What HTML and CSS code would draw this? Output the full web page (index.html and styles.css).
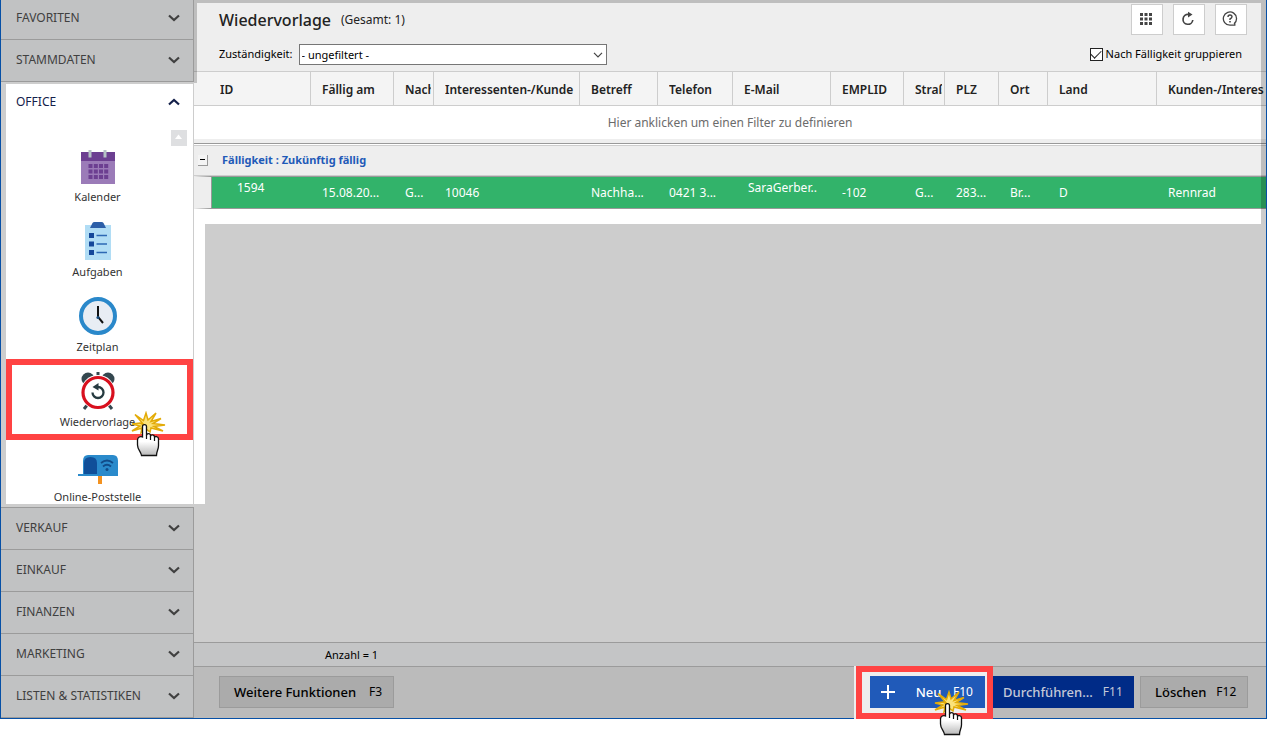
FILE: index.html
```html
<!DOCTYPE html>
<html lang="de">
<head>
<meta charset="utf-8">
<meta name="viewport" content="width=device-width, initial-scale=1">
<title>Wiedervorlage</title>
<link rel="stylesheet" href="styles.css">
</head>
<body>
<svg class="defs" aria-hidden="true">
  <symbol id="down" viewBox="0 0 12 8"><path d="M1 1.500 6 6l5-4.500" fill="none" stroke="currentColor" stroke-width="2.200"/></symbol>
  <symbol id="up" viewBox="0 0 12 8"><path d="M1 6.500 6 2l5 4.500" fill="none" stroke="currentColor" stroke-width="2.200"/></symbol>
  <symbol id="pointer" viewBox="0 0 36 46">
    <path d="M13 14 4 3.500l8.500 6L15 2l2 7 8-7-5 8.500 10-3-8 5 12 1.500-11 1.500 9 4.500-12-3-1 4-4-3-5 4 1-5-10 3 8-5-8-2 8-1z" fill="#fbe27a" stroke="#e3ab08" stroke-width="1.500"/>
    <path d="M11.500 15.500c0-2.500 4-2.500 4 0v9c0-2.500 4-2.300 4 0v1c0-2.300 4-2 4 .5v1c0-2.200 4-2 4 .8v7c0 4-2 5-2 9.700h-15c-.5-4-4-6-4-10.500v-5c0-3 3-4 5-3z" fill="url(#hand)" stroke="#111" stroke-width="1.300"/>
    <path d="M15.500 24v4M19.500 25v4M23.500 27v3" stroke="#111" stroke-width="1.200"/>
  </symbol>
  <linearGradient id="hand" x1="0" y1="0" x2="0" y2="1"><stop offset=".55" stop-color="#fff"/><stop offset="1" stop-color="#b8b8b8"/></linearGradient>
</svg>
<div class="window">
  <nav class="sidebar">
    <button class="group">FAVORITEN<svg><use href="#down"/></svg></button>
    <button class="group">STAMMDATEN<svg><use href="#down"/></svg></button>
    <section class="panel">
      <button class="group open">OFFICE<svg><use href="#up"/></svg></button>
      <button class="scroll" aria-label="Nach oben"><svg viewBox="0 0 16 16"><path d="M4 9l3.500-4.500L11 9z" fill="#fff"/></svg></button>
      <a class="entry" href="#"><svg viewBox="0 0 40 40"><path d="M3 6h34v32H3z" fill="#9b7bb8"/><path d="M3 6h34v9H3z" fill="#6c3f91"/><path d="M10.500 4h3v7.500h-3zM25.500 4h3v7.500h-3z" fill="#b5c2c5"/><path d="M10.500 18h4v4h-4zm5.300 0h4v4h-4zm5.200 0h4v4h-4zm5.200 0h4v4h-4zM10.500 23.500h4v4h-4zm5.300 0h4v4h-4zm5.200 0h4v4h-4zm5.200 0h4v4h-4zM10.500 29h4v4h-4zm5.300 0h4v4h-4zm5.200 0h4v4h-4zm5.200 0h4v4h-4z" fill="#6c3f91"/></svg><span>Kalender</span></a>
      <a class="entry" href="#"><svg viewBox="0 0 40 40"><path d="M7 4h26v35H7z" fill="#b1ddf5"/><path d="M12 7l2.500-5q.5-1 2-1h7q1.500 0 2 1L28 7z" fill="#2d5fa8"/><path d="M11 12h5v5h-5zM11 20.500h5v5h-5zM11 29h5v5h-5z" fill="#15489a"/><path d="M18.500 14.500H29M18.500 23H29M18.500 31.500H29" stroke="#2d68b4" stroke-width="1.500"/></svg><span>Aufgaben</span></a>
      <a class="entry" href="#"><svg viewBox="0 0 40 40"><circle cx="20" cy="20" r="17" fill="#e8edf4" stroke="#2a88ca" stroke-width="4"/><path d="M20 10v11l5 6" fill="none" stroke="#111" stroke-width="2"/><circle cx="20" cy="21.500" r="1.600" fill="#1c4f80"/></svg><span>Zeitplan</span></a>
      <a class="entry marked" href="#"><svg viewBox="0 0 40 40"><path d="M10 33l-4 5M30 33l4 5" stroke="#34474f" stroke-width="3"/><circle cx="10" cy="8" r="6.500" fill="#34474f"/><circle cx="30" cy="8" r="6.500" fill="#34474f"/><path d="M20 1v5" stroke="#34474f" stroke-width="3"/><circle cx="20" cy="21.500" r="17.500" fill="#fff"/><circle cx="20" cy="21.500" r="15" fill="#fff" stroke="#d8101e" stroke-width="3.200"/><path d="M14.500 21.500a5.500 5.500 0 1 0 5.500-5.500" fill="none" stroke="#263a40" stroke-width="2.300"/><path d="M14.500 16l6-4v7.500z" fill="#263a40"/></svg><span>Wiedervorlage</span><svg class="pointer"><use href="#pointer"/></svg></a>
      <a class="entry" href="#"><svg viewBox="0 0 40 40"><path d="M20 28h4v10h-4z" fill="#f39220"/><path d="M10 9h25q5 0 5 6v14H5V15q0-6 5-6z" fill="#2a8acb"/><path d="M6 28V17q0-6 6.500-6T19 17v11z" fill="#104f99"/><path d="M0 29h40" stroke="#2a8acb" stroke-width="2"/><path d="M23 17q6-5 12 0M25 20.500q4-3.500 8 0" fill="none" stroke="#114b88" stroke-width="1.800"/><circle cx="29" cy="23.500" r="1.500" fill="#114b88"/></svg><span>Online-Poststelle</span></a>
    </section>
    <button class="group">VERKAUF<svg><use href="#down"/></svg></button>
    <button class="group">EINKAUF<svg><use href="#down"/></svg></button>
    <button class="group">FINANZEN<svg><use href="#down"/></svg></button>
    <button class="group">MARKETING<svg><use href="#down"/></svg></button>
    <button class="group">LISTEN &amp; STATISTIKEN<svg><use href="#down"/></svg></button>
  </nav>
  <main class="main">
    <div class="content">
      <header class="head">
        <h1>Wiedervorlage</h1><span class="total">(Gesamt: 1)</span>
        <div class="tools">
          <button aria-label="Ansicht"><svg viewBox="0 0 16 16"><path d="M2 2h3v3H2zm4.500 0h3v3h-3zM11 2h3v3h-3zM2 6.500h3v3H2zm4.500 0h3v3h-3zm4.500 0h3v3h-3zM2 11h3v3H2zm4.500 0h3v3h-3zm4.500 0h3v3h-3z" fill="#444"/></svg></button>
          <button aria-label="Aktualisieren"><svg viewBox="0 0 16 16"><path d="M8.500 3.500A4.900 4.900 0 1 0 12.800 9" fill="none" stroke="#444" stroke-width="1.700"/><path d="M8 .8 12.500 3.600 8 6.500z" fill="#444"/></svg></button>
          <button aria-label="Hilfe"><svg viewBox="0 0 16 16"><path d="M12 12.800A6.600 6.600 0 1 0 8 14.200h4.800v-2" fill="none" stroke="#444" stroke-width="1.300"/><path d="M6 6q0-2 2-2t2 1.800q0 1.200-2 2.200v1" fill="none" stroke="#444" stroke-width="1.400"/><path d="M7.200 10h1.600v1.600H7.200z" fill="#444"/></svg></button>
        </div>
      </header>
      <div class="filter">
        <label for="resp">Zuständigkeit:</label>
        <span class="select"><select id="resp"><option>- ungefiltert -</option></select><svg viewBox="0 0 10 6"><path d="M1 .8l4 4 4-4" fill="none" stroke="#444" stroke-width="1.200"/></svg></span>
        <span class="check"><input type="checkbox" id="grp" checked><label for="grp">Nach Fälligkeit gruppieren</label></span>
      </div>
      <table class="grid">
        <colgroup><col class="w117"><col class="w83"><col class="w40"><col class="w146"><col class="w78"><col class="w75"><col class="w98"><col class="w73"><col class="w41"><col class="w54"><col class="w49"><col class="w109"><col></colgroup>
        <thead>
          <tr><th><div>ID</div></th><th><div>Fällig am</div></th><th><div>Nach</div></th><th><div>Interessenten-/Kunde</div></th><th><div>Betreff</div></th><th><div>Telefon</div></th><th><div>E-Mail</div></th><th><div>EMPLID</div></th><th><div>Straß</div></th><th><div>PLZ</div></th><th><div>Ort</div></th><th><div>Land</div></th><th><div>Kunden-/Interess</div></th></tr>
        </thead>
        <tbody>
          <tr class="hint"><td colspan="13">Hier anklicken um einen Filter zu definieren</td></tr>
          <tr class="cluster"><td colspan="13"><div><button aria-label="Gruppe schließen"></button>Fälligkeit : Zukünftig fällig</div></td></tr>
          <tr class="record"><td class="raised">1594</td><td>15.08.20...</td><td>G...</td><td>10046</td><td>Nachha...</td><td>0421 3...</td><td class="raised mail">SaraGerber..</td><td>-102</td><td>G...</td><td>283...</td><td>Br...</td><td>D</td><td>Rennrad</td></tr>
        </tbody>
      </table>
      <div class="shade top"></div><div class="shade left"></div><div class="shade right"></div>
    </div>
    <div class="canvas"></div>
    <div class="count">Anzahl = 1</div>
    <footer class="actions">
      <button class="btn more">Weitere Funktionen<kbd>F3</kbd></button>
      <div class="focus"><button class="btn new"><svg viewBox="0 0 16 16"><path d="M8 1v14M1 8h14" stroke="#fff" stroke-width="2"/></svg>Neu<kbd>F10</kbd></button><svg class="pointer"><use href="#pointer"/></svg></div>
      <button class="btn run">Durchführen...<kbd>F11</kbd></button>
      <button class="btn delete">Löschen<kbd>F12</kbd></button>
    </footer>
  </main>
</div>
</body>
</html>
```
FILE: styles.css
```css
* { box-sizing: border-box; }
body {
  margin: 0;
  height: 100vh;
  padding-bottom: 18px;
  overflow: hidden;
  background: #fff;
  font: 13px/20px "Noto Sans", "Open Sans", sans-serif;
  color: #222;
}
button { font: inherit; border: 0; padding: 0; border-radius: 0; color: inherit; }
.defs { position: absolute; width: 0; height: 0; }
.window {
  display: flex;
  height: 100%;
  border: 1px solid #0750a6;
  border-top: 0;
}

/* Navigation */
.sidebar {
  display: flex;
  flex-direction: column;
  flex: 0 0 193px;
  margin-top: -2px;
  border-right: 1px solid #9b9b9b;
}
.group {
  display: flex;
  justify-content: space-between;
  align-items: center;
  flex: 0 0 42px;
  width: 100%;
  padding: 0 13px 2px 15px;
  background: #c1c2c3;
  border-bottom: 1px solid #9b9b9b;
  font-size: 12px;
  color: #404040;
}
.group svg { width: 12px; height: 8px; }
.panel {
  display: flex;
  flex-direction: column;
  flex: 1;
  min-height: 0;
  margin-right: -1px;
  background: #fff;
  border: solid #cdcdcd;
  border-width: 2px 1px 3px 5px;
  box-shadow: 0 1px #9b9b9b;
  margin-bottom: 1px;
  overflow: hidden;
}
.group.open { flex-basis: 38px; height: 38px; padding: 0 13px 2px 10px; background: #fff; border: 0; color: #14204a; }
.scroll { flex: 0 0 16px; width: 16px; height: 16px; margin: 8px 6px -10px auto; background: #dedfe1; }
.scroll svg { display: block; }
.entry {
  display: flex;
  flex: 0 0 75px;
  flex-direction: column;
  align-items: center;
  gap: 1px;
  position: relative;
  padding: 10px 4px 4px 0;
  font-size: 11px;
  color: #333;
  text-decoration: none;
}
.entry > svg { width: 40px; height: 40px; flex: none; }
.marked::before { content: ""; position: absolute; inset: -2px 0 -4px; border: 6px solid #ff4343; }
.entry > .pointer { position: absolute; left: 125px; top: 50px; width: 36px; height: 46px; }
.marked { z-index: 1; }

/* Main area */
.main { display: flex; flex-direction: column; flex: 1; min-width: 0; }
.content { position: relative; background: #eee; padding-top: 3px; }
.head { display: flex; align-items: center; padding: 0 19px 0 25px; height: 33px; }
h1 { margin: 0 10px 0 0; font-size: 16px; font-weight: 500; }
.total { font-size: 12px; }
.tools { display: flex; gap: 10px; margin-left: auto; }
.tools button { display: grid; place-items: center; width: 32px; height: 31px; padding: 0 2px 2px 0; background: #fff; border: 1px solid #cdcdcd; }
.tools svg { width: 16px; height: 16px; }
.filter { display: flex; align-items: center; height: 35px; padding: 1px 24px 0 25px; font-size: 11px; color: #000; }
.select { position: relative; display: flex; flex: 0 0 308px; margin-left: 6px; }
.select select { width: 100%; height: 21px; padding: 0 2px; appearance: none; border: 1px solid #767676; border-radius: 0; background: #fff; font: inherit; color: #000; }
.select svg { position: absolute; right: 4px; top: 8px; width: 10px; height: 6px; pointer-events: none; }
.check { display: flex; align-items: center; gap: 3px; margin-left: auto; }
.check input { display: grid; place-items: center; appearance: none; width: 13px; height: 13px; margin: 0; background: #fff; border: 1px solid #222; }
.check input:checked::after { content: ""; width: 9px; height: 5px; border: solid #222; border-width: 0 0 1px 1px; rotate: -45deg; margin-top: -3px; }

.grid { width: 100%; table-layout: fixed; border-spacing: 0; background: #fff; border-bottom: 15px solid #fff; }
.w117 { width: 117px; } .w83 { width: 83px; } .w40 { width: 40px; } .w146 { width: 146px; }
.w78 { width: 78px; } .w75 { width: 75px; } .w98 { width: 98px; } .w73 { width: 73px; }
.w41 { width: 41px; } .w54 { width: 54px; } .w49 { width: 49px; } .w109 { width: 109px; }
.grid th, .grid td { padding: 0 0 0 11px; text-align: left; white-space: nowrap; overflow: hidden; }
.grid th {
  height: 35px;
  padding: 2px 2px 0 11px;
  background: #f4f4f4;
  border: solid #cdcdcd;
  border-width: 1px 1px 1px 0;
  font-size: 12px;
  font-weight: 600;
}
.grid th div { overflow: hidden; }
.grid th:first-child { padding-left: 26px; }
.grid th:last-child { border-right: 0; }
.grid .hint td { height: 38px; padding: 0 0 4px; text-align: center; color: #6b6b6b; font-size: 12px; border-bottom: 1px solid #999; box-shadow: inset 0 -4px #eee; }
.grid .cluster td { height: 32px; padding: 0; border-bottom: 1px solid #cdcdcd; border-top: 1px solid #fff; background: #eee; box-shadow: inset 0 1px #cdcdcd; font-size: 11px; font-weight: 700; color: #1f5ab8; }
.cluster div { display: flex; align-items: center; gap: 14px; padding-left: 4px; }
.cluster button { display: grid; place-items: center; width: 10px; height: 11px; background: #f4f4f4; border: solid #999; border-width: 0 1px 1px 0; }
.cluster button::before { content: ""; width: 5px; height: 1px; background: #000; }
.grid .record td { height: 33px; background: #32b36a; border: solid #999; border-width: 1px 0; color: #fff; font-size: 12px; }
.grid .record td:first-child { padding-left: 26px; border-left: 17px solid #eee; box-shadow: inset 1px 0 #999; }
.grid .record .raised { padding-bottom: 10px; }
.grid .record .mail { padding-left: 15px; }

/* Dimmed margins around the lit area */
.shade { position: absolute; background: rgba(0, 0, 0, .2); }
.shade.top { top: 0; left: 0; right: 0; height: 3px; }
.shade.left { top: 3px; left: 0; width: 3px; height: 80px; }
.shade.right { top: 3px; right: 0; bottom: 0; width: 5px; }

.canvas { flex: 1; position: relative; background: #cdcdcd; }
.canvas::before { content: ""; position: absolute; left: 0; top: 0; width: 11px; height: 67%; background: #fff; }
.count { height: 24px; padding-left: 131px; line-height: 24px; background: #c4c5c6; border-top: 1px solid #9b9b9b; font-size: 11px; color: #000; }
.actions { display: flex; align-items: center; gap: 6px; height: 52px; padding: 0 18px 2px 25px; background: #bbb; border-top: 1px solid #9b9b9b; }
.btn { display: flex; align-items: center; justify-content: space-between; gap: 10px; height: 32px; padding: 0 11px 0 14px; background: #ababab; border: 1px solid #9b9b9b; color: #000; font-weight: 500; }
kbd { font: 400 12px/20px "Noto Sans", sans-serif; }
.btn.more { width: 175px; }
.btn.delete { width: 108px; }
.focus { position: relative; z-index: 1; margin-left: auto; }
.focus::before { content: ""; position: absolute; inset: -10px -8px -11px -14px; background: #eee; border: 6px solid #ff4343; box-shadow: -2px 0 #eee; }
.focus .pointer { position: absolute; left: 64px; top: 14px; width: 36px; height: 46px; }
.btn.new { position: relative; width: 115px; padding: 0 12px 0 10px; background: #205ab9; border: 0; color: #fff; }
.btn.new svg { width: 16px; height: 16px; margin-right: 8px; }
.btn.run { width: 143px; padding: 0 12px; background: #002b87; border: 0; color: #c4c8d8; }
```
